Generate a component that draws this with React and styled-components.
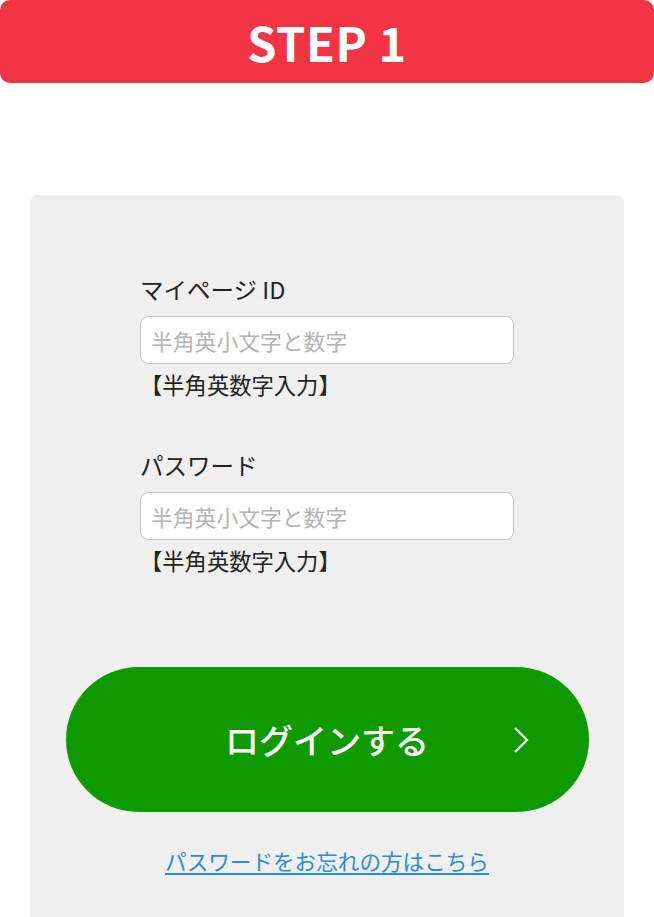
import styled, { createGlobalStyle } from "styled-components";

// Colors
const red = '#f23545';
const green = '#0e9a00';
const cardGray = '#efefef';
const ink = '#222222';
const linkBlue = '#2a8bd6';

const fontFamily = '"Noto Sans CJK JP", "Noto Sans", sans-serif';

const GlobalStyle = createGlobalStyle`
  html, body {
    margin: 0;
    padding: 0;
    background: #ffffff;
  }
  body {
    font-family: ${fontFamily};
    color: ${ink};
  }
  * {
    box-sizing: border-box;
  }
`;

const Page = styled.div`
  width: 654px;
  min-height: 917px;
  overflow: hidden;
`;

const StepBar = styled.div`
  height: 83px;
  background: ${red};
  border-radius: 10px;
  display: flex;
  align-items: center;
  justify-content: center;
`;

const StepTitle = styled.h1`
  margin: 0;
  color: #ffffff;
  font-size: 47px;
  font-weight: 700;
  line-height: 1;
  letter-spacing: 0.5px;
`;

const Card = styled.form`
  margin: 112px 30px 0;
  padding: 79px 0 60px;
  background: ${cardGray};
  border-radius: 8px 8px 0 0;
  display: flex;
  flex-direction: column;
  align-items: center;
`;

const Field = styled.div`
  width: 374px;
  display: flex;
  flex-direction: column;
  margin-top: ${p => p.$top || 0}px;
`;

const Label = styled.label`
  font-size: 23.5px;
  line-height: 30px;
  font-weight: 400;
  color: ${ink};
  margin-bottom: 12px;
`;

const Input = styled.input`
  width: 100%;
  height: 48px;
  padding: 0 10px;
  border: 1px solid #c6c6c6;
  border-radius: 8px;
  background: #ffffff;
  font-family: ${fontFamily};
  font-size: 21.8px;
  color: ${ink};
  outline: none;

  &::placeholder {
    color: #b3b3b3;
  }
`;

const Note = styled.p`
  margin: 5px 0 0;
  font-size: 22.3px;
  line-height: 30px;
  font-weight: 400;
  color: ${ink};
`;

const LoginButton = styled.button`
  position: relative;
  margin-top: 92px;
  width: 523px;
  height: 145px;
  border: none;
  border-radius: 73px;
  background: ${green};
  color: #ffffff;
  font-family: ${fontFamily};
  font-size: 34px;
  font-weight: 500;
  display: flex;
  align-items: center;
  justify-content: center;
  cursor: pointer;
`;

const Chevron = styled.svg`
  position: absolute;
  right: 59px;
  top: 59px;
`;

const ForgotLink = styled.a`
  margin-top: 34px;
  font-size: 21.6px;
  line-height: 30px;
  color: ${linkBlue};
  text-decoration: underline;
  text-underline-offset: 3px;
`;

const fields = [
  { id: 'mypage-id', label: 'マイページ ID', top: 0 },
  { id: 'password', label: 'パスワード', top: 51 },
];

const App = () => (
  <Page>
    <GlobalStyle />
    <StepBar>
      <StepTitle>STEP 1</StepTitle>
    </StepBar>
    <Card onSubmit={e => e.preventDefault()}>
      {fields.map(f => (
        <Field key={f.id} $top={f.top}>
          <Label htmlFor={f.id}>{f.label}</Label>
          <Input id={f.id} type="text" placeholder="半角英小文字と数字" />
          <Note>【半角英数字入力】</Note>
        </Field>
      ))}
      <LoginButton type="submit">
        ログインする
        <Chevron width="18" height="28" viewBox="0 0 18 28">
          <polyline points="3,2 15,14 3,26" fill="none" stroke="#ffffff" strokeWidth="2.2" />
        </Chevron>
      </LoginButton>
      <ForgotLink href="#">パスワードをお忘れの方はこちら</ForgotLink>
    </Card>
  </Page>
);

export default App;
